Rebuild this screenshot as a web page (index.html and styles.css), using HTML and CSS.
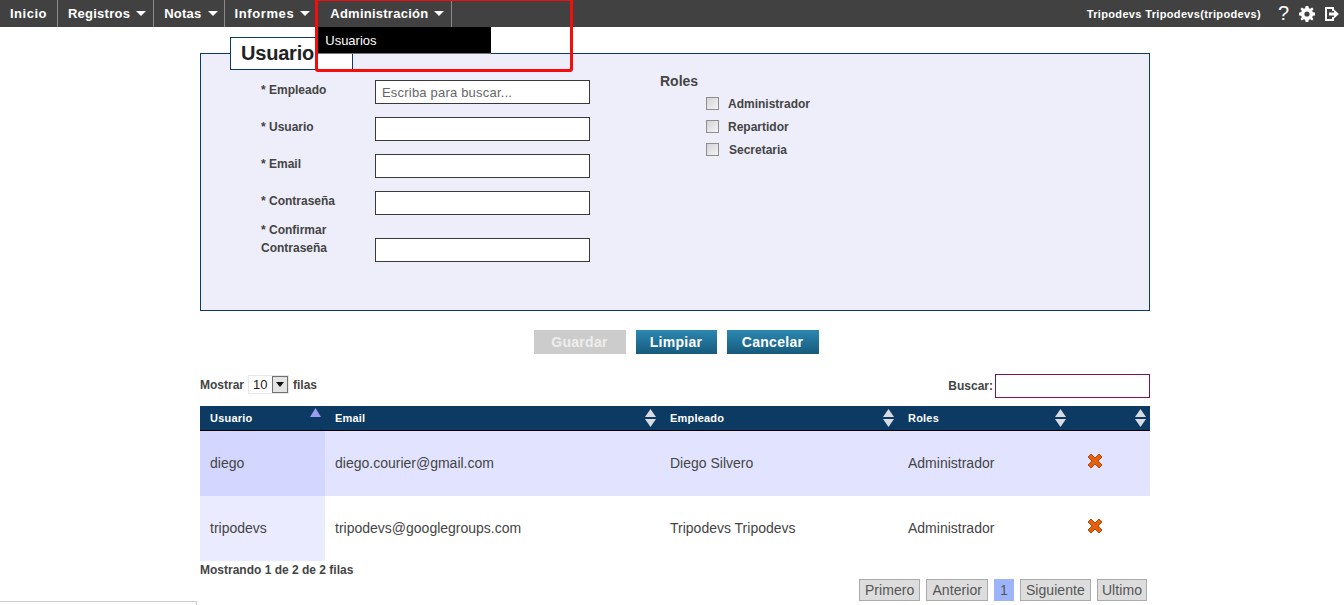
FILE: index.html
```html
<!DOCTYPE html>
<html lang="es">
<head>
    <meta charset="UTF-8">
    <title>Usuario</title>
    <link rel="stylesheet" href="styles.css">
</head>
<body>
  <svg class="defs" width="0" height="0">
    <symbol id="sort" viewBox="0 0 11 18">
      <path d="M5.5 0 L11 8 H0 Z" fill="#d8dce2"/>
      <path d="M0 10 H11 L5.5 18 Z" fill="#d8dce2"/>
    </symbol>
    <symbol id="cross" viewBox="0 0 16 16">
      <path d="M1 4 L4 1 L8 5 L12 1 L15 4 L11 8 L15 12 L12 15 L8 11 L4 15 L1 12 L5 8 Z" fill="#e2600f" stroke="#b8480a" stroke-width="1"/>
    </symbol>
  </svg>

  <nav class="topbar">
    <ul class="menu">
      <li class="item first"><a href="#">Inicio</a></li>
      <li class="item second"><a href="#">Registros<i class="caret"></i></a></li>
      <li class="item"><a href="#">Notas<i class="caret"></i></a></li>
      <li class="item no-line"><a href="#">Informes<i class="caret"></i></a></li>
      <li class="item open">
        <a href="#">Administración<i class="caret"></i></a>
        <ul class="submenu">
          <li><a href="#">Usuarios</a></li>
        </ul>
      </li>
    </ul>
    <div class="user">
      <span class="user-name">Tripodevs Tripodevs(tripodevs)</span>
      <span class="help">?</span>
      <svg class="tool gear" width="16" height="16" viewBox="0 0 16 16">
        <path fill="#fff" fill-rule="evenodd" d="M6.6 0 H9.4 L9.8 2.2 L11.2 2.8 L13.1 1.5 L14.5 2.9 L13.2 4.8 L13.8 6.2 L16 6.6 V9.4 L13.8 9.8 L13.2 11.2 L14.5 13.1 L13.1 14.5 L11.2 13.2 L9.8 13.8 L9.4 16 H6.6 L6.2 13.8 L4.8 13.2 L2.9 14.5 L1.5 13.1 L2.8 11.2 L2.2 9.8 L0 9.4 V6.6 L2.2 6.2 L2.8 4.8 L1.5 2.9 L2.9 1.5 L4.8 2.8 L6.2 2.2 Z M8 5.4 A2.6 2.6 0 1 0 8 10.6 A2.6 2.6 0 1 0 8 5.4 Z"/>
      </svg>
      <svg class="tool" width="14" height="14" viewBox="0 0 14 14">
        <path fill="#fff" d="M0 0 H9 V4 H7 V2 H2 V12 H7 V10 H9 V14 H0 Z"/>
        <path fill="#fff" d="M4 5.5 H9 V2.5 L14 7 L9 11.5 V8.5 H4 Z"/>
      </svg>
    </div>
  </nav>

  <div class="annotation"></div>

  <main class="page">
    <fieldset class="panel">
      <legend>Usuario</legend>
      <div class="panel-body">
        <div class="fields">
          <div class="field">
            <label>* Empleado</label>
            <input type="text" placeholder="Escriba para buscar...">
          </div>
          <div class="field">
            <label>* Usuario</label>
            <input type="text">
          </div>
          <div class="field">
            <label>* Email</label>
            <input type="text">
          </div>
          <div class="field">
            <label>* Contraseña</label>
            <input type="password">
          </div>
          <div class="field tall">
            <label>* Confirmar Contraseña</label>
            <input type="password">
          </div>
        </div>
        <div class="roles">
          <h3>Roles</h3>
          <label class="role"><input type="checkbox"><span>Administrador</span></label>
          <label class="role"><input type="checkbox"><span>Repartidor</span></label>
          <label class="role"><input type="checkbox"><span class="nudge">Secretaria</span></label>
        </div>
      </div>
    </fieldset>

    <div class="actions">
      <button class="btn off" type="button">Guardar</button>
      <button class="btn" type="button">Limpiar</button>
      <button class="btn" type="button">Cancelar</button>
    </div>

    <div class="table-top">
      <div class="length">Mostrar
        <span class="fake-select">10<i class="drop"><b></b></i></span>
        filas
      </div>
      <div class="search"><label>Buscar:</label><input type="text"></div>
    </div>

    <table class="grid">
      <thead>
        <tr>
          <th class="c-user"><div class="th-in">Usuario<svg class="sort-up" width="11" height="9" viewBox="0 0 11 9"><path d="M5.5 0 L11 9 H0 Z" fill="#9a9cf0"/></svg></div></th>
          <th class="c-mail"><div class="th-in">Email<svg width="11" height="18"><use href="#sort"/></svg></div></th>
          <th class="c-emp"><div class="th-in">Empleado<svg width="11" height="18"><use href="#sort"/></svg></div></th>
          <th class="c-rol"><div class="th-in">Roles<svg width="11" height="18"><use href="#sort"/></svg></div></th>
          <th class="c-act"><div class="th-in"><span></span><svg width="11" height="18"><use href="#sort"/></svg></div></th>
        </tr>
      </thead>
      <tbody>
        <tr class="odd">
          <td class="sorted">diego</td>
          <td>diego.courier@gmail.com</td>
          <td>Diego Silvero</td>
          <td>Administrador</td>
          <td class="act"><svg width="16" height="16"><use href="#cross"/></svg></td>
        </tr>
        <tr class="even">
          <td class="sorted">tripodevs</td>
          <td>tripodevs@googlegroups.com</td>
          <td>Tripodevs Tripodevs</td>
          <td>Administrador</td>
          <td class="act"><svg width="16" height="16"><use href="#cross"/></svg></td>
        </tr>
      </tbody>
    </table>

    <div class="table-info">Mostrando 1 de 2 de 2 filas</div>
    <div class="paging">
      <a href="#">Primero</a>
      <a href="#">Anterior</a>
      <a href="#" class="current">1</a>
      <a href="#">Siguiente</a>
      <a href="#">Ultimo</a>
    </div>
  </main>

  <div class="corner"></div>
</body>
</html>
```

FILE: styles.css
```css
html, body { margin: 0; height: 605px; overflow: hidden; }
body { font-family: "Liberation Sans", Arial, sans-serif; font-size: 12px; color: #444; background: #fff; position: relative; }
a { color: inherit; text-decoration: none; }
.defs { display: block; height: 0; }

/* barra superior */
.topbar { height: 27px; background: #414141; display: flex; justify-content: space-between; color: #fff; }
.menu, .submenu { list-style: none; margin: 0; padding: 0; }
.menu { display: flex; }
.item { position: relative; border-right: 1px solid #8a8a8a; height: 27px; }
.item.no-line { border-right: none; }
.item > a { display: flex; align-items: center; height: 27px; padding: 0 6px 0 10px; font-size: 13px; font-weight: bold; letter-spacing: 0.25px; }
.item.first > a { padding-right: 10px; letter-spacing: 0.5px; }
.item.second > a { padding-right: 7px; }
.item.no-line > a { padding-right: 10px; letter-spacing: 0.6px; }
.item.open > a { padding-right: 7px; }
.caret { width: 0; height: 0; margin-left: 6px; border-left: 5.5px solid transparent; border-right: 5.5px solid transparent; border-top: 5px solid #fff; }
.submenu { position: absolute; left: -2px; top: 27px; width: 173px; height: 26px; background: #000; border-bottom: 1px solid #777; z-index: 2; }
.submenu a { display: block; padding: 0 7px; line-height: 27px; font-size: 13px; }

.user { display: flex; align-items: center; padding-right: 5px; }
.user-name { font-size: 11px; font-weight: bold; letter-spacing: 0.35px; margin-right: 17px; }
.help { font-size: 20px; width: 11px; margin-right: 10px; }
.tool.gear { margin-right: 10px; }

.annotation { position: absolute; left: 315px; top: -2px; width: 252px; height: 68px; border: 3px solid #f50d0d; border-radius: 3px; z-index: 3; }

/* formulario */
.page { width: 950px; margin-left: 200px; }
.panel { margin: 10px 0 0; padding: 0; height: 274px; box-sizing: border-box; border: 1px solid #0c3a63; background: #eeeefa; min-width: 0; }
.panel legend { margin-left: 29px; padding: 0 10px; width: 123px; height: 33px; box-sizing: border-box; border: 1px solid #0c3a63; background: #fff; color: #222; font-size: 20px; font-weight: bold; letter-spacing: -0.2px; line-height: 31px; white-space: nowrap; overflow: visible; }
.panel-body { display: flex; padding: 10px 0 0 60px; }
.fields { width: 329px; margin-top: 0; }
.field { display: flex; height: 37px; }
.field label { width: 114px; font-weight: bold; color: #444; padding-top: 3px; line-height: 15px; }
.field input { width: 215px; height: 24px; box-sizing: border-box; border: 1px solid #3a3a3a; background: #fff; padding: 0 6px; font: 13px "Liberation Sans", Arial, sans-serif; color: #555; border-radius: 0; margin: 0; }
.field input::placeholder { color: #666; opacity: 1; letter-spacing: 0.2px; }
.field.tall { height: 47px; }
.field.tall label { width: 95px; margin-right: 19px; line-height: 18px; padding-top: 0; margin-top: -7px; }
.field.tall input { margin-top: 10px; }

.roles { margin-left: 70px; margin-top: -8px; }
.roles h3 { margin: 0 0 2px; font-size: 14px; line-height: 18px; color: #444; }
.role { display: flex; align-items: center; height: 23px; margin-left: 46px; font-weight: bold; }
.role input { appearance: none; width: 13px; height: 13px; margin: 0 9px 0 0; border: 1px solid #8e8e8e; box-sizing: border-box; background: linear-gradient(135deg, #d4d4d8, #f4f4f6); }
.nudge { margin-left: 1px; }

.actions { display: flex; justify-content: center; gap: 10px; margin-top: 19px; padding-left: 2px; }
.btn { height: 24px; padding: 0; border: none; color: #fff; font: bold 14px "Liberation Sans", Arial, sans-serif; letter-spacing: 0.3px; background: linear-gradient(#2b88b2, #175a7c); width: 81px; }
.btn:last-child { width: 92px; }
.btn.off { background: #ccc; color: #eee; width: 92px; }

/* tabla */
.table-top { display: flex; justify-content: space-between; margin-top: 20px; height: 32px; }
.length { display: flex; align-items: center; gap: 3px; height: 21px; font-weight: bold; }
.fake-select { display: inline-flex; align-items: center; justify-content: space-between; width: 41px; height: 19px; box-sizing: border-box; margin: 0 1px; padding: 0 0 0 4px; border: 1px solid #e8e8e8; font-size: 13px; font-weight: normal; color: #222; }
.drop { display: flex; align-items: center; justify-content: center; width: 16px; height: 17px; box-sizing: border-box; border: 1px solid #707070; background: #e4e4e4; }
.drop b { width: 0; height: 0; border-left: 4px solid transparent; border-right: 4px solid transparent; border-top: 5px solid #111; }
.search { display: flex; align-items: center; height: 24px; font-weight: bold; }
.search label { margin-right: 2px; }
.search input { width: 155px; height: 24px; box-sizing: border-box; border: 1px solid #80124e; margin: 0; padding: 0 4px; border-radius: 0; }

.grid { width: 950px; table-layout: fixed; border-collapse: collapse; }
.c-user { width: 125px; }
.c-mail { width: 335px; }
.c-emp { width: 238px; }
.c-rol { width: 172px; }
.c-act { width: 80px; }
.grid th { height: 24px; padding: 0; background: #0c3a63; color: #fff; font-size: 11px; font-weight: bold; text-align: left; border-bottom: 1px solid #000; letter-spacing: 0.2px; }
.th-in { display: flex; justify-content: space-between; align-items: center; padding: 0 4px 0 10px; height: 24px; }
.sort-up { align-self: flex-start; margin-top: 2px; }
.grid td { height: 65px; box-sizing: border-box; padding: 0 10px; font-size: 14px; color: #444; }
.odd td { background: #e2e4ff; }
.odd .sorted { background: #d3d6ff; }
.even td { background: #fff; }
.even .sorted { background: #eaebff; }
.grid td.act { padding: 0 0 4px 17px; }
.act svg { display: block; }

.table-info { margin-top: 2px; font-weight: bold; line-height: 14px; }
.paging { display: flex; justify-content: flex-end; gap: 6px; margin-top: 2px; padding-right: 3px; }
.paging a { height: 20px; padding: 0 5px; line-height: 20px; font-size: 14px; letter-spacing: 0.07px; color: #555; background: #ddd; border: 1px solid #aaa; }
.paging a:last-child { padding: 0 4px; }
.paging a.current { background: #9db4fa; border-color: #9db4fa; }

.corner { position: absolute; left: 0; top: 601px; width: 196px; height: 10px; border-top: 1px solid #ccc; border-right: 1px solid #ccc; }
```
